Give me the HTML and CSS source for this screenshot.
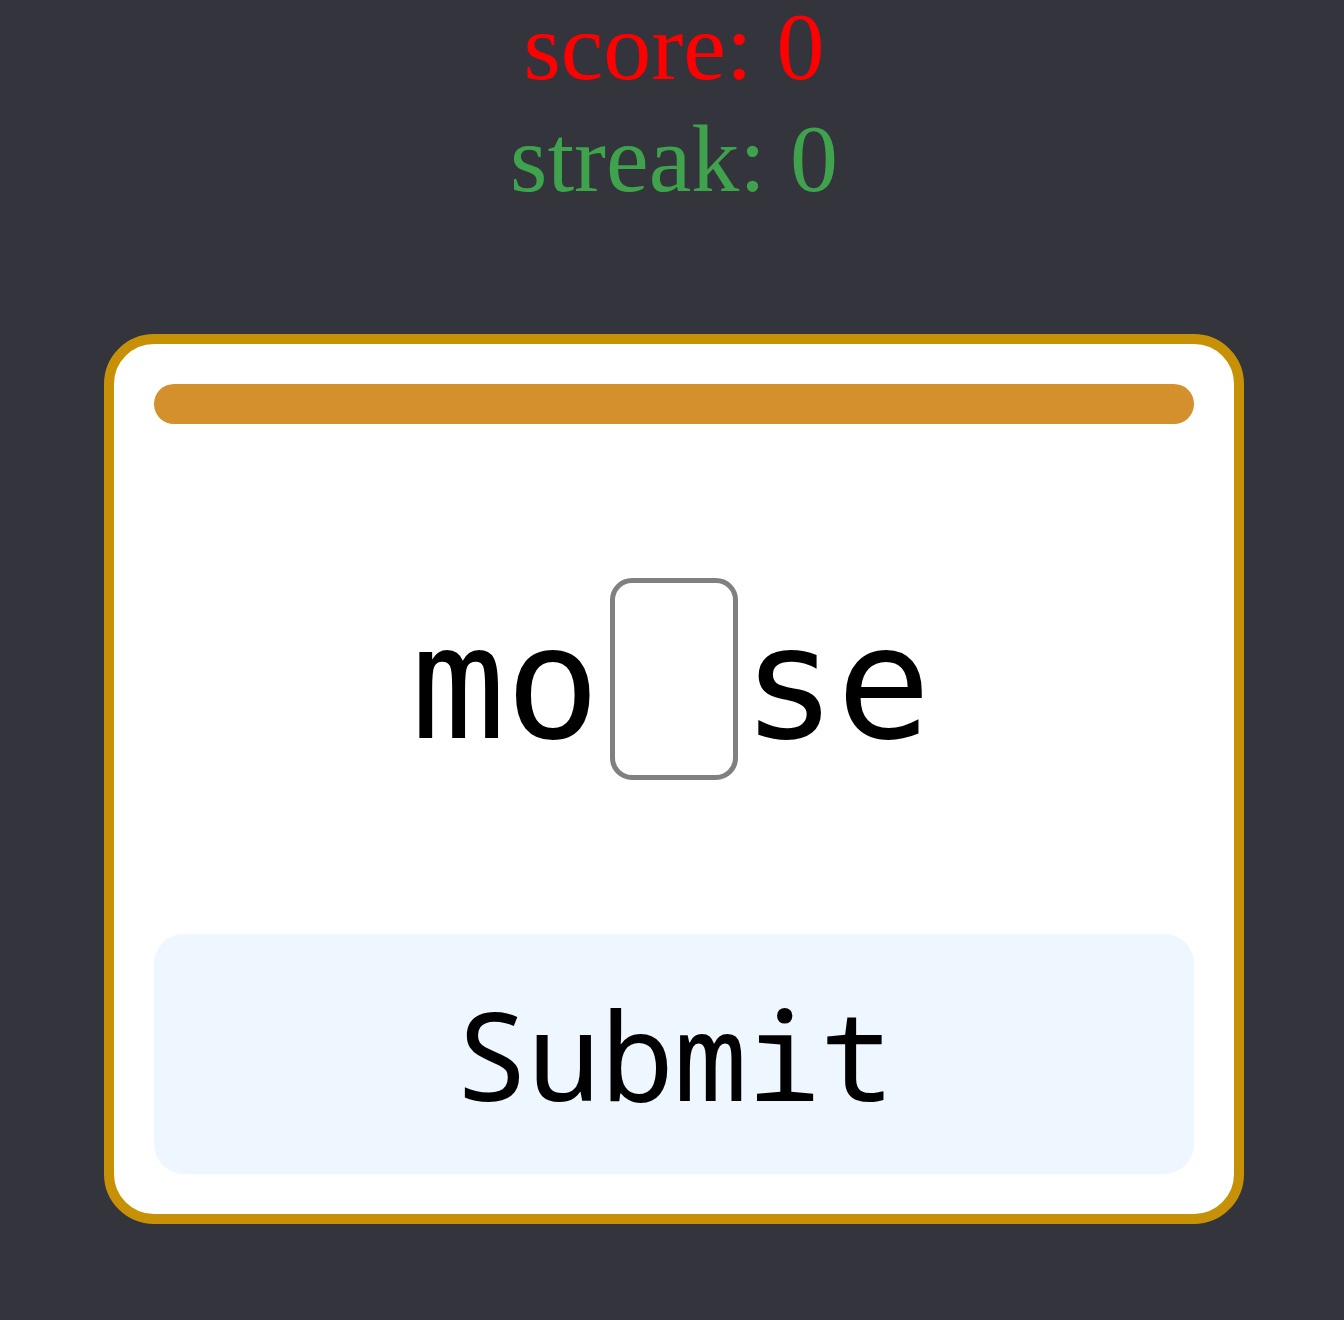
FILE: index.html
```html
<!DOCTYPE html>
<html lang="en">
<head>
<meta charset="utf-8">
<title>Spelling game</title>
<link rel="stylesheet" href="styles.css">
</head>
<body>
<main class="page">
  <header class="stats">
    <div class="score">score: 0</div>
    <div class="streak">streak: 0</div>
  </header>
  <section class="card">
    <div class="timer"></div>
    <div class="word">
      <span class="part">mo</span><input class="blank" type="text" maxlength="1" aria-label="missing letter"><span class="part">se</span>
    </div>
    <button class="submit" type="button">Submit</button>
  </section>
</main>
</body>
</html>
```
FILE: styles.css
```css
html, body {
  margin: 0;
  padding: 0;
  background: #34343c;
}

.page {
  padding-left: 4px;
  min-height: 1320px;
  box-sizing: border-box;
}

.stats {
  text-align: center;
  font-family: "Liberation Serif", "Times New Roman", serif;
  font-size: 96px;
}

.score {
  color: #ff0000;
  line-height: 93px;
}

.streak {
  color: #3fa34d;
  line-height: 93px;
  margin-top: 19px;
}

.card {
  box-sizing: border-box;
  width: 1140px;
  margin: 129px auto 0;
  background: #ffffff;
  border: 10px solid #c79107;
  border-radius: 50px;
  padding: 40px;
  display: flex;
  flex-direction: column;
}

.timer {
  height: 40px;
  border-radius: 20px;
  background: #d3902c;
}

.word {
  height: 510px;
  display: flex;
  align-items: center;
  justify-content: center;
  font-family: "DejaVu Sans Mono", monospace;
  font-size: 157px;
  color: #000;
  padding-right: 6px;
  box-sizing: border-box;
}

.part {
  line-height: 1;
  margin-top: 8px;
}

.blank {
  box-sizing: border-box;
  width: 128px;
  height: 202px;
  border: 5px solid #808080;
  border-radius: 22px;
  background: #fff;
  margin: 0 4px 0 10px;
  padding: 0;
  font: inherit;
  outline: none;
}

.submit {
  height: 240px;
  border: none;
  border-radius: 30px;
  background: #eef6ff;
  font-family: "Noto Sans Mono", "Roboto Mono", "DejaVu Sans Mono", monospace;
  font-size: 122px;
  color: #000;
  cursor: pointer;
}
```
